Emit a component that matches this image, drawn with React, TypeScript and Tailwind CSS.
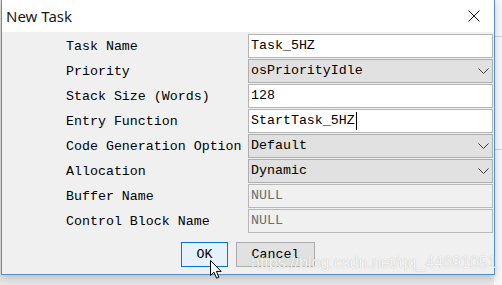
import React from 'react';

type Field = {
  label: string;
  value: string;
  kind: 'text' | 'select' | 'disabled';
  caret?: boolean;
};

const fields: Field[] = [
  { label: 'Task Name', value: 'Task_5HZ', kind: 'text' },
  { label: 'Priority', value: 'osPriorityIdle', kind: 'select' },
  { label: 'Stack Size (Words)', value: '128', kind: 'text' },
  { label: 'Entry Function', value: 'StartTask_5HZ', kind: 'text', caret: true },
  { label: 'Code Generation Option', value: 'Default', kind: 'select' },
  { label: 'Allocation', value: 'Dynamic', kind: 'select' },
  { label: 'Buffer Name', value: 'NULL', kind: 'disabled' },
  { label: 'Control Block Name', value: 'NULL', kind: 'disabled' },
];

const mono = "font-['Liberation_Mono',monospace] text-[13.3px] leading-none";

function Chevron() {
  return (
    <svg width="11" height="6" viewBox="0 0 11 6" fill="none" className="shrink-0">
      <polyline points="0.5,0.5 5.5,5.5 10.5,0.5" stroke="#3c3c3c" strokeWidth="1" />
    </svg>
  );
}

function FieldBox({ field }: { field: Field }) {
  if (field.kind === 'select') {
    return (
      <div className="h-[24px] flex items-center justify-between border border-[#adadad] bg-[#e1e1e1] pl-[2px] pr-[3px]">
        <span className={`${mono} text-black`}>{field.value}</span>
        <Chevron />
      </div>
    );
  }
  if (field.kind === 'disabled') {
    return (
      <div className="h-[24px] flex items-center border border-[#b8b8b8] bg-[#f0f0f0] pl-[2px]">
        <span className={`${mono} text-[#6d6d6d]`}>{field.value}</span>
      </div>
    );
  }
  return (
    <div className="h-[24px] flex items-center border border-[#b4b4b4] bg-white pl-[2px]">
      <span className={`${mono} text-black`}>{field.value}</span>
      {field.caret && <span className="w-px h-[18px] bg-black ml-px" />}
    </div>
  );
}

function Cursor() {
  return (
    <svg
      className="absolute left-[210px] top-[260px]"
      width="13"
      height="19"
      viewBox="0 0 13 19"
    >
      <path
        d="M0.5,0.5 L0.5,15.5 L4,12.2 L6.6,18.2 L8.9,17.2 L6.4,11.4 L11.2,11.4 Z"
        fill="#fff"
        stroke="#000"
        strokeWidth="1"
        strokeLinejoin="round"
      />
    </svg>
  );
}

export default function App() {
  return (
    <div className="relative w-[502px] h-[285px] overflow-hidden bg-[#e6e6e6]">
      <div className="absolute right-0 top-0 w-[8px] h-[285px] bg-[#f7f7f7] flex flex-col">
        <div className="h-[37px] border-b border-[#d0d0d0]" />
        <div className="h-[113px] border-b border-[#d0d0d0]" />
      </div>

      <div className="relative ml-px w-[494px] h-[275px] border-x border-b border-[#4d8fd8] bg-[#f0f0f0] flex flex-col shadow-[0_3px_8px_rgba(0,0,0,0.18)]">
        <div className="h-[32px] bg-white flex items-center justify-between pl-[4px] pr-[14px]">
          <span className="font-['Noto_Sans',sans-serif] text-[15px] text-[#1a1a1a]">New Task</span>
          <svg width="12" height="12" viewBox="0 0 12 12">
            <path d="M0.5,0.5 L11.5,11.5 M11.5,0.5 L0.5,11.5" stroke="#111" strokeWidth="1" />
          </svg>
        </div>

        <div className="flex flex-col gap-px pt-[2px]">
          {fields.map((f) => (
            <div key={f.label} className="flex items-center">
              <div className={`w-[246px] pl-[64px] pt-[2px] ${mono} text-black`}>{f.label}</div>
              <div className="w-[245px]">
                <FieldBox field={f} />
              </div>
            </div>
          ))}
        </div>

        <div className="flex justify-center gap-[8px] mt-[9px]">
          <button className={`w-[47px] h-[25px] border border-[#0078d7] bg-[#e5f1fb] ${mono} text-black`}>
            OK
          </button>
          <button className={`w-[79px] h-[25px] border border-[#adadad] bg-[#e1e1e1] ${mono} text-black`}>
            Cancel
          </button>
        </div>
      </div>

      <div className="absolute left-[251px] top-[255px] font-['Liberation_Sans',sans-serif] text-[16px] leading-none text-white/85 [text-shadow:0_0_1px_rgba(140,140,140,0.7)]">
        https://blog.csdn.net/qq_44691051
      </div>

      <Cursor />
    </div>
  );
}
